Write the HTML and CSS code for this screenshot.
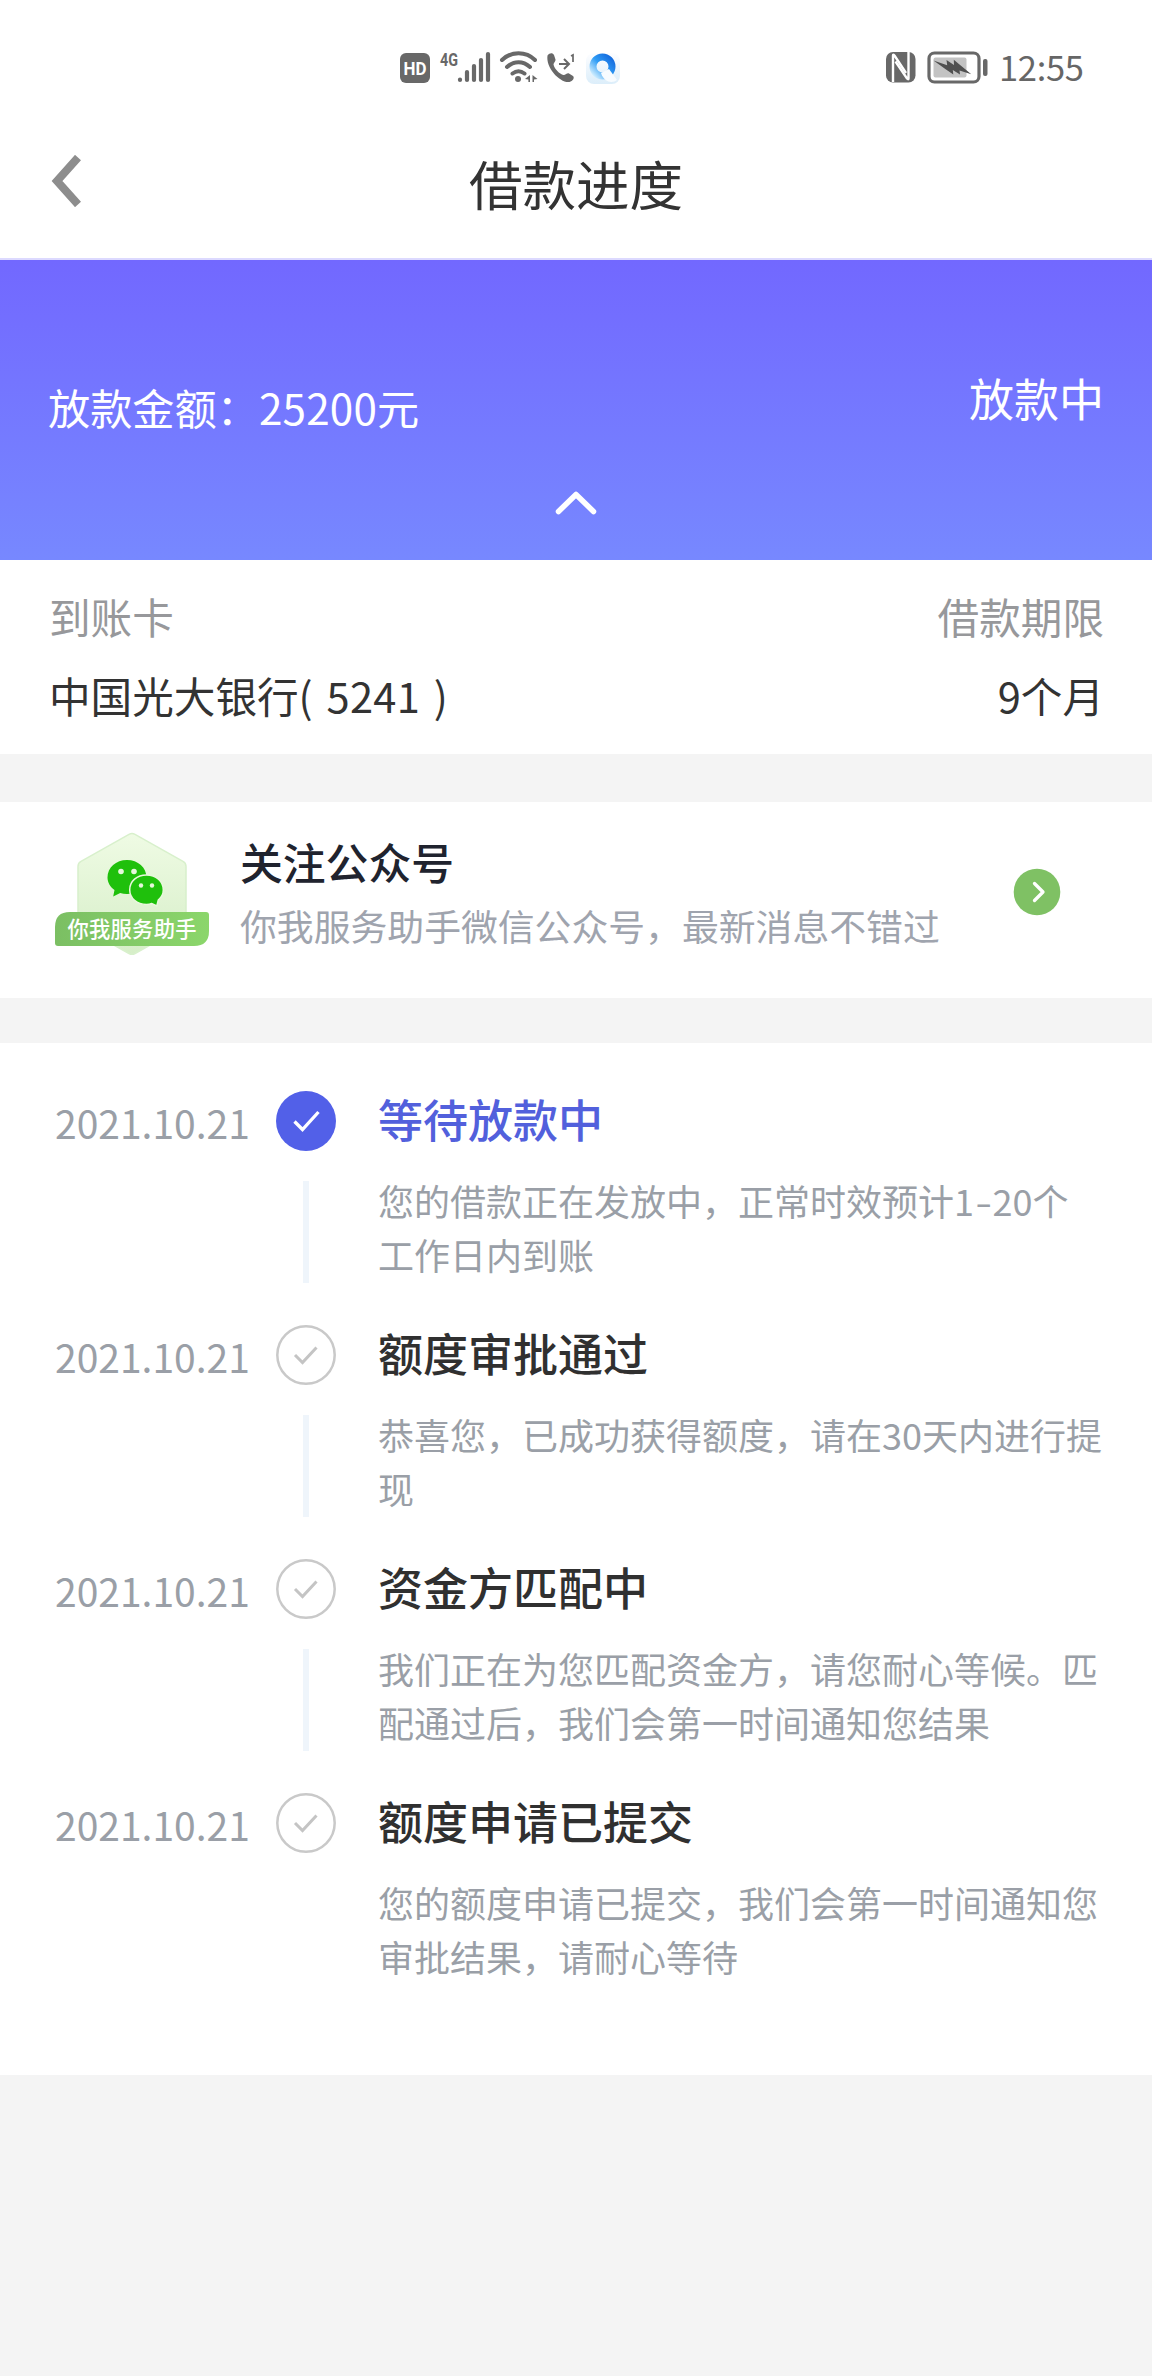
FILE: index.html
```html
<!DOCTYPE html>
<html lang="zh-CN">
<head>
<meta charset="utf-8">
<title>借款进度</title>
<link rel="stylesheet" href="styles.css">
</head>
<body>
<div class="status-bar">
  <svg class="status-left" width="224" height="40" viewBox="398 48 224 40">
    <rect x="400" y="53" width="30" height="30" rx="6" fill="#686868"/>
    <text x="415" y="75" class="hd" text-anchor="middle" textLength="23" lengthAdjust="spacingAndGlyphs">HD</text>
    <text x="440" y="66" class="net" textLength="18" lengthAdjust="spacingAndGlyphs">4G</text>
    <g stroke="#686868" stroke-width="4.2" stroke-linecap="round">
      <path d="M460 79.5v.5M467 72v8M474 66v14M481 60v20M488 54v26"/>
    </g>
    <g fill="none" stroke="#686868" stroke-width="4" stroke-linecap="round">
      <path d="M502 60c9-9 24-9 33 0M507 67c7-6.500 16-6.500 23 0M512.500 73.500c4-3 8-3 12 0"/>
    </g>
    <circle cx="518" cy="79" r="3" fill="#686868"/>
    <path d="M530 75v7h-1.600v-2.500L525 79zM532.500 75l5 4-3.500.5V82h-1.500z" fill="#686868"/>
    <path d="M547.500 55.500c2-2.500 5-3 6.500-.5l1.500 4.500c.5 2-2 3-2 5 1 4.500 6 9.500 10 10.500 2 .3 3.500-2.300 5.500-1.500l4 2.500c2 2-.5 5-3.500 6-9 1.500-24-14-22-26.500z" fill="#686868"/>
    <path d="M559 64h9m-4-5 5 5-5 5" fill="none" stroke="#686868" stroke-width="2"/>
    <path d="M571 56l2-1v7" fill="none" stroke="#686868" stroke-width="1.700"/>
    <defs>
      <linearGradient id="browser-ring" x1="1" y1="0" x2="0" y2="1"><stop offset="0" stop-color="#1268dd"/><stop offset=".5" stop-color="#2f9cf5"/><stop offset="1" stop-color="#d8f2ff"/></linearGradient>
      <linearGradient id="browser-tile" x1="0" y1="0" x2="0" y2="1"><stop offset="0" stop-color="#fdfdff"/><stop offset="1" stop-color="#dceefa"/></linearGradient>
    </defs>
    <rect x="586" y="53" width="34" height="31" rx="8" fill="url(#browser-tile)"/>
    <circle cx="602.500" cy="66.500" r="9.500" fill="none" stroke="url(#browser-ring)" stroke-width="7"/>
    <path d="M601 73l8-4 8 11c-5 4-13 2-16-7z" fill="#f8fcff"/>
  </svg>
  <svg class="status-right" width="104" height="40" viewBox="884 48 104 40">
    <rect x="886" y="52" width="29.500" height="30.500" rx="7" fill="#686868"/>
    <path d="M893 82V55.500q0-1.500 1.500 0L906 73" fill="none" stroke="#fff" stroke-width="2.400"/>
    <path d="M908.500 52v26.500q0 1.500-1.500 0L895.500 61.500" fill="none" stroke="#fff" stroke-width="2.400"/>
    <rect x="929" y="53" width="50" height="29" rx="5.500" fill="#fff" stroke="#686868" stroke-width="3.200"/>
    <rect x="933.500" y="57.500" width="33" height="20" rx="2" fill="#c3c3c3"/>
    <path d="M933.500 60.500l13.700 4.700-.7-5.200 7.500 5-.2-5.200 7.500 6.200 10 8.200-11.800-3.700.5 4-7.200-4.500.5 4.500-7.300-5z" fill="#505050"/>
    <rect x="983" y="59" width="4.500" height="17" rx="2" fill="#686868"/>
  </svg>
  <span class="clock">12:55</span>
</div>

<header class="nav">
  <svg class="back" width="34" height="52" viewBox="0 0 34 52"><path d="M29 2.500 8 26l21 23.500" fill="none" stroke="#8d8d8d" stroke-width="8"/></svg>
  <h1 class="nav-title">借款进度</h1>
</header>

<section class="hero">
  <div class="hero-row">
    <span class="amount">放款金额：<span class="amount-num">25200</span>元</span>
    <span class="state">放款中</span>
  </div>
  <svg class="collapse" width="42" height="24" viewBox="0 0 42 24"><path d="M3.500 20.500 21 3.500l17.500 17" fill="none" stroke="#fff" stroke-width="5.500" stroke-linecap="round" stroke-linejoin="round"/></svg>
</section>

<section class="details">
  <span class="label">到账卡</span><span class="label end">借款期限</span>
  <span class="value">中国光大银行<span class="card-no">( 5241 )</span></span><span class="value end">9个月</span>
</section>

<section class="follow">
  <svg class="badge" width="156" height="126" viewBox="54 831 156 126">
    <defs>
      <linearGradient id="hex" x1="0" y1="0" x2="0" y2="1"><stop offset="0" stop-color="#effbe4"/><stop offset="1" stop-color="#d6eec8"/></linearGradient>
      <linearGradient id="ribbon"><stop offset="0" stop-color="#7bbf63"/><stop offset="1" stop-color="#8bd66b"/></linearGradient>
    </defs>
    <path d="M129 834.300q3-1.700 6 0l48 27q3 1.700 3 5v55q0 3.500-3 5.200l-48 27q-3 1.700-6 0l-48-27q-3-1.700-3-5.200v-55q0-3.300 3-5z" fill="url(#hex)" stroke="#d8f0cc" stroke-width="1.500"/>
    <path d="M127 860c11 0 19.500 7.500 19.500 17.500S138 894 127 894c-2.500 0-4.700-.3-6.800-1l-7 3.500 1.300-6.500c-4.300-3.200-7-7.500-7-12.500C107.500 867.500 116 860 127 860z" fill="#1fc00c"/>
    <path d="M146.500 875c9.500 0 16.800 6.500 16.800 15 0 4-2 7.500-5 10l-1.500 6-5-2.500c-2.200.8-2.500.9-5.300.9-9.500 0-16.800-6.200-16.800-14.700s7.300-14.700 16.800-14.700z" fill="#1fc00c" stroke="#e9f8dd" stroke-width="1.500"/>
    <g fill="#e6f8dc"><circle cx="121" cy="871.500" r="2.800"/><circle cx="134" cy="871.500" r="2.800"/><circle cx="141" cy="885.500" r="2.200"/><circle cx="152" cy="885.500" r="2.200"/></g>
    <path d="M70 912h136q3 0 3 3v16q0 15-15 15H58q-3 0-3-3v-16q0-15 15-15z" fill="url(#ribbon)"/>
    <text x="67.500" y="937" class="badge-text" textLength="129">你我服务助手</text>
  </svg>
  <div class="follow-text">
    <h2 class="follow-title">关注公众号</h2>
    <p class="follow-sub">你我服务助手微信公众号，最新消息不错过</p>
  </div>
  <svg class="go" width="48" height="48" viewBox="0 0 48 48"><circle cx="24" cy="24" r="23.300" fill="#7fc164"/><path d="M21.500 15.500 30 24l-8.500 8.500" fill="none" stroke="#fff" stroke-width="3.300" stroke-linecap="round" stroke-linejoin="round"/></svg>
</section>

<section class="timeline">
  <article class="step current">
    <time class="date">2021.10.21</time>
    <div class="rail"><svg class="mark" width="60" height="60" viewBox="0 0 60 60"><circle cx="30" cy="30" r="30" fill="#5260e8"/><path d="M18.500 30.500l8 8 16-17.500" fill="none" stroke="#fff" stroke-width="3.300"/></svg><i class="line"></i></div>
    <div class="body"><h3 class="step-title">等待放款中</h3><p class="desc">您的借款正在发放中，正常时效预计1<span class="dash">-</span>20个<br>工作日内到账</p></div>
  </article>
  <article class="step">
    <time class="date">2021.10.21</time>
    <div class="rail"><svg class="mark" width="60" height="60" viewBox="0 0 60 60"><circle cx="30" cy="30" r="28.700" fill="#fff" stroke="#c9c9c9" stroke-width="2.500"/><path d="M19 30l7.500 7.500 14-15" fill="none" stroke="#c4c4c4" stroke-width="3"/></svg><i class="line"></i></div>
    <div class="body"><h3 class="step-title">额度审批通过</h3><p class="desc">恭喜您，已成功获得额度，请在30天内进行提<br>现</p></div>
  </article>
  <article class="step">
    <time class="date">2021.10.21</time>
    <div class="rail"><svg class="mark" width="60" height="60" viewBox="0 0 60 60"><circle cx="30" cy="30" r="28.700" fill="#fff" stroke="#c9c9c9" stroke-width="2.500"/><path d="M19 30l7.500 7.500 14-15" fill="none" stroke="#c4c4c4" stroke-width="3"/></svg><i class="line"></i></div>
    <div class="body"><h3 class="step-title">资金方匹配中</h3><p class="desc">我们正在为您匹配资金方，请您耐心等候。匹<br>配通过后，我们会第一时间通知您结果</p></div>
  </article>
  <article class="step">
    <time class="date">2021.10.21</time>
    <div class="rail"><svg class="mark" width="60" height="60" viewBox="0 0 60 60"><circle cx="30" cy="30" r="28.700" fill="#fff" stroke="#c9c9c9" stroke-width="2.500"/><path d="M19 30l7.500 7.500 14-15" fill="none" stroke="#c4c4c4" stroke-width="3"/></svg></div>
    <div class="body"><h3 class="step-title">额度申请已提交</h3><p class="desc">您的额度申请已提交，我们会第一时间通知您<br>审批结果，请耐心等待</p></div>
  </article>
</section>
</body>
</html>
```

FILE: styles.css
```css
* { box-sizing: border-box; margin: 0; padding: 0; }
body {
  width: 1152px;
  min-height: 2376px;
  background: #f4f4f4;
  color: #333;
  font-family: "Noto Sans CJK SC", "Noto Sans", sans-serif;
  white-space: nowrap;
}
h1, h2, h3 { font-weight: 400; }
svg { display: block; flex: none; }

.status-bar {
  height: 104px;
  padding: 48px 0 0 398px;
  display: flex;
  align-items: flex-start;
  background: #fff;
}
.status-right { margin-left: 262px; }
.clock { margin-left: 11px; font-size: 34.500px; line-height: 37px; letter-spacing: -.3px; color: #666; }
.hd { font: 700 19px Roboto, sans-serif; fill: #fff; }
.net { font: 700 19px Roboto, sans-serif; fill: #686868; }

.nav {
  height: 156px;
  padding: 0 48px;
  display: grid;
  grid-template-columns: 1fr auto 1fr;
  align-items: center;
  background: #fff;
  border-bottom: 2px solid #dcd9ff;
}
.back { margin-left: 1px; }
.nav-title { font-size: 53.500px; line-height: 80px; padding-top: 4px; }

.hero {
  height: 300px;
  padding: 108px 48px 0;
  display: flex;
  flex-direction: column;
  align-items: center;
  color: #fff;
  background: linear-gradient(#7268ff, #7788ff);
}
.hero-row { width: 100%; height: 123px; display: flex; justify-content: space-between; align-items: flex-start; line-height: 60px; }
.amount { font-size: 42.200px; padding-top: 9px; }
.amount-num { letter-spacing: .2px; }
.state { font-size: 45px; }

.details {
  height: 194px;
  padding: 17px 48px 0 49px;
  display: grid;
  grid-template-columns: 1fr 1fr;
  grid-template-rows: 79px 79px;
  line-height: 79px;
  font-size: 41.600px;
  background: #fff;
}
.label { color: #97989b; }
.end { text-align: right; }
.card-no { letter-spacing: .3px; word-spacing: 4px; }

.follow {
  height: 196px;
  margin: 48px 0 45px;
  padding: 27px 91px 0 54px;
  display: flex;
  align-items: flex-start;
  background: #fff;
}
.badge { margin-top: 2px; }
.badge-text { font-size: 21.300px; font-weight: 500; fill: #fff; }
.follow-text { flex: 1; margin-left: 30px; line-height: 64px; }
.follow-title { font-size: 42.800px; font-weight: 500; color: #20232e; }
.follow-sub { font-size: 36.850px; color: #9fa4ae; }
.go { margin-top: 39px; }

.timeline { height: 1032px; padding: 48px 49px 0 55px; background: #fff; }
.step { height: 234px; display: grid; grid-template-columns: 221px 60px 1fr; }
.date { font-size: 39px; line-height: 62px; color: #9a9fa7; }
.rail { display: flex; flex-direction: column; align-items: center; }
.line { width: 6px; height: 102px; margin-top: 30px; background: #eff5fb; }
.body { padding-left: 42px; }
.step-title { font-size: 45px; line-height: 54px; padding-top: 1px; font-weight: 500; color: #303030; }
.current .step-title { color: #5260dc; }
.desc { margin-top: 27px; font-size: 36px; line-height: 54px; color: #9a9fa7; }
.dash { display: inline-block; margin: 0 1px 0 2px; transform: scaleX(1.35); padding: 0 1.500px; }
```
